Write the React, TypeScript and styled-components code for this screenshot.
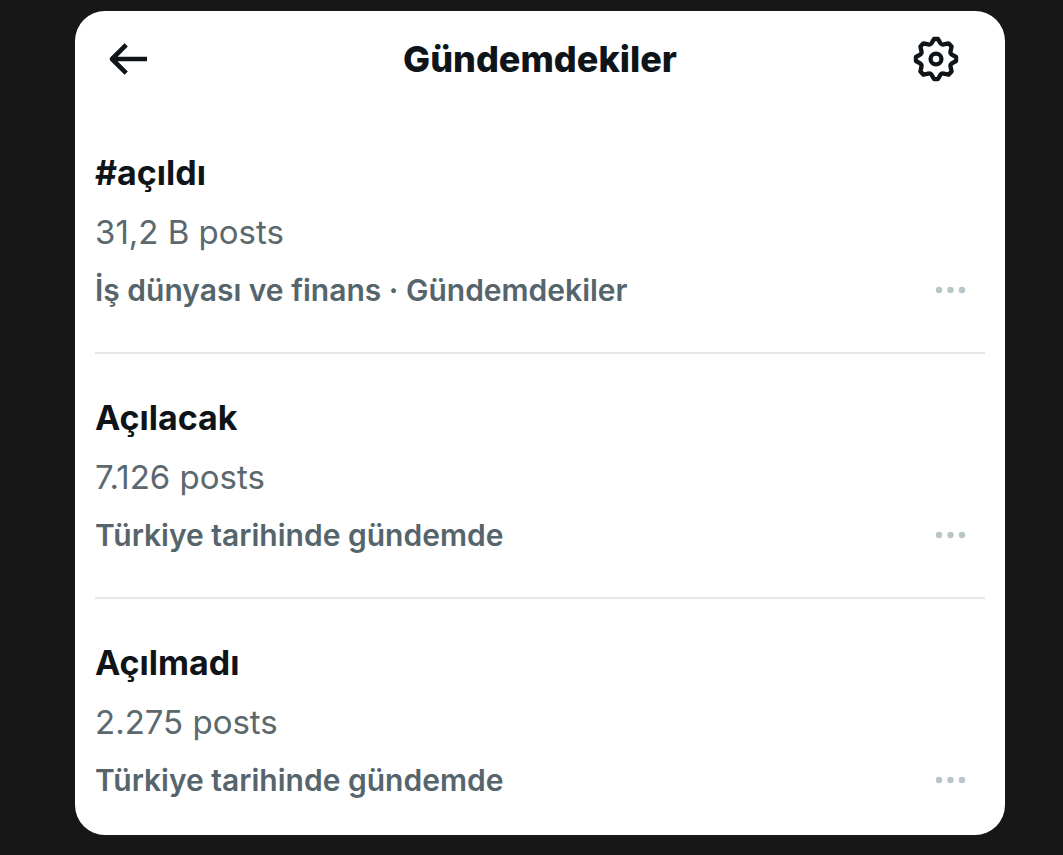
import React from "react";
import styled, { createGlobalStyle } from "styled-components";

const GlobalStyle = createGlobalStyle`
  * { box-sizing: border-box; }
  body {
    margin: 0;
    background: #171717;
    color: #0f1419;
    font-family: Inter, "Noto Sans", sans-serif;
  }
`;

const Page = styled.div`
  padding: 11px 58px 20px 75px;
`;

const Card = styled.main`
  background: #ffffff;
  border-radius: 30px;
  padding: 0 20px;
`;

const Header = styled.header`
  display: grid;
  grid-template-columns: 99px 1fr 99px;
  align-items: center;
  height: 96px;
`;

const IconButton = styled.button`
  display: flex;
  align-items: center;
  justify-content: center;
  height: 48px;
  padding: 0;
  border: 0;
  background: transparent;
  color: #0f1419;
  cursor: pointer;
`;

const BackButton = styled(IconButton)`
  width: 66px;
`;

const Title = styled.h1`
  margin: 0;
  font-size: 36px;
  line-height: 48px;
  font-weight: 800;
  text-align: center;
`;

const TrendList = styled.ul`
  list-style: none;
  margin: 0;
  padding: 0;
`;

const TrendItem = styled.li`
  display: flex;
  align-items: flex-end;
  justify-content: space-between;
  height: 245px;
  padding-bottom: 33px;

  & + & {
    border-top: 2px solid #e4e7e9;
  }

  &:last-child {
    height: 238px;
    padding-bottom: 26px;
  }
`;

const TrendName = styled.h2`
  margin: 0;
  font-size: 34px;
  line-height: 60px;
  font-weight: 700;
`;

const PostCount = styled.p`
  margin: 0;
  color: #5b686e;
  font-size: 33px;
  line-height: 58px;
`;

const Topic = styled.p`
  margin: 0;
  color: #56656c;
  font-size: 30px;
  line-height: 58px;
  font-weight: 600;
`;

const MoreButton = styled(IconButton)`
  width: 69px;
  height: 58px;
  color: #b9c5c8;
`;

const trends = [
  { name: "#açıldı", posts: "31,2 B posts", topic: "İş dünyası ve finans · Gündemdekiler" },
  { name: "Açılacak", posts: "7.126 posts", topic: "Türkiye tarihinde gündemde" },
  { name: "Açılmadı", posts: "2.275 posts", topic: "Türkiye tarihinde gündemde" },
];

const BackIcon = () => (
  <svg width="40" height="34" viewBox="0 0 40 34" fill="none" stroke="currentColor" strokeWidth="4.6" strokeLinejoin="round" aria-hidden="true">
    <path d="M18.2 2.8L4 17L18.2 31.2M4 17H39" />
  </svg>
);

const GearIcon = () => (
  <svg width="52" height="52" viewBox="0 0 24 24" fill="none" stroke="currentColor" strokeWidth="2" strokeLinejoin="round" aria-hidden="true">
    <path d="M11.07 2.75h1.86l1.07 1.91c.34.52.98.77 1.59.63l2.21-.49 1.4 1.4-.49 2.21c-.14.61.11 1.25.63 1.59l1.91 1.07v1.86l-1.91 1.07c-.52.34-.77.98-.63 1.59l.49 2.21-1.4 1.4-2.21-.49c-.61-.14-1.25.11-1.59.63l-1.07 1.91h-1.86l-1.07-1.91c-.34-.52-.98-.77-1.59-.63l-2.21.49-1.4-1.4.49-2.21c.14-.61-.11-1.25-.63-1.59l-1.91-1.07v-1.86l1.91-1.07c.52-.34.77-.98.63-1.59l-.49-2.21 1.4-1.4 2.21.49c.61.14 1.25-.11 1.59-.63z" />
    <circle cx="12" cy="12" r="2.5" />
  </svg>
);

const MoreIcon = () => (
  <svg width="31" height="8" viewBox="0 0 31 8" fill="currentColor" aria-hidden="true">
    <circle cx="4" cy="4" r="3.2" />
    <circle cx="15.5" cy="4" r="3.2" />
    <circle cx="27" cy="4" r="3.2" />
  </svg>
);

export default function App() {
  return (
    <>
      <GlobalStyle />
      <Page>
        <Card>
          <Header>
            <BackButton type="button" aria-label="Geri"><BackIcon /></BackButton>
            <Title>Gündemdekiler</Title>
            <IconButton type="button" aria-label="Ayarlar"><GearIcon /></IconButton>
          </Header>
          <TrendList>
            {trends.map((trend) => (
              <TrendItem key={trend.name}>
                <div>
                  <TrendName>{trend.name}</TrendName>
                  <PostCount>{trend.posts}</PostCount>
                  <Topic>{trend.topic}</Topic>
                </div>
                <MoreButton type="button" aria-label="Daha fazla"><MoreIcon /></MoreButton>
              </TrendItem>
            ))}
          </TrendList>
        </Card>
      </Page>
    </>
  );
}
